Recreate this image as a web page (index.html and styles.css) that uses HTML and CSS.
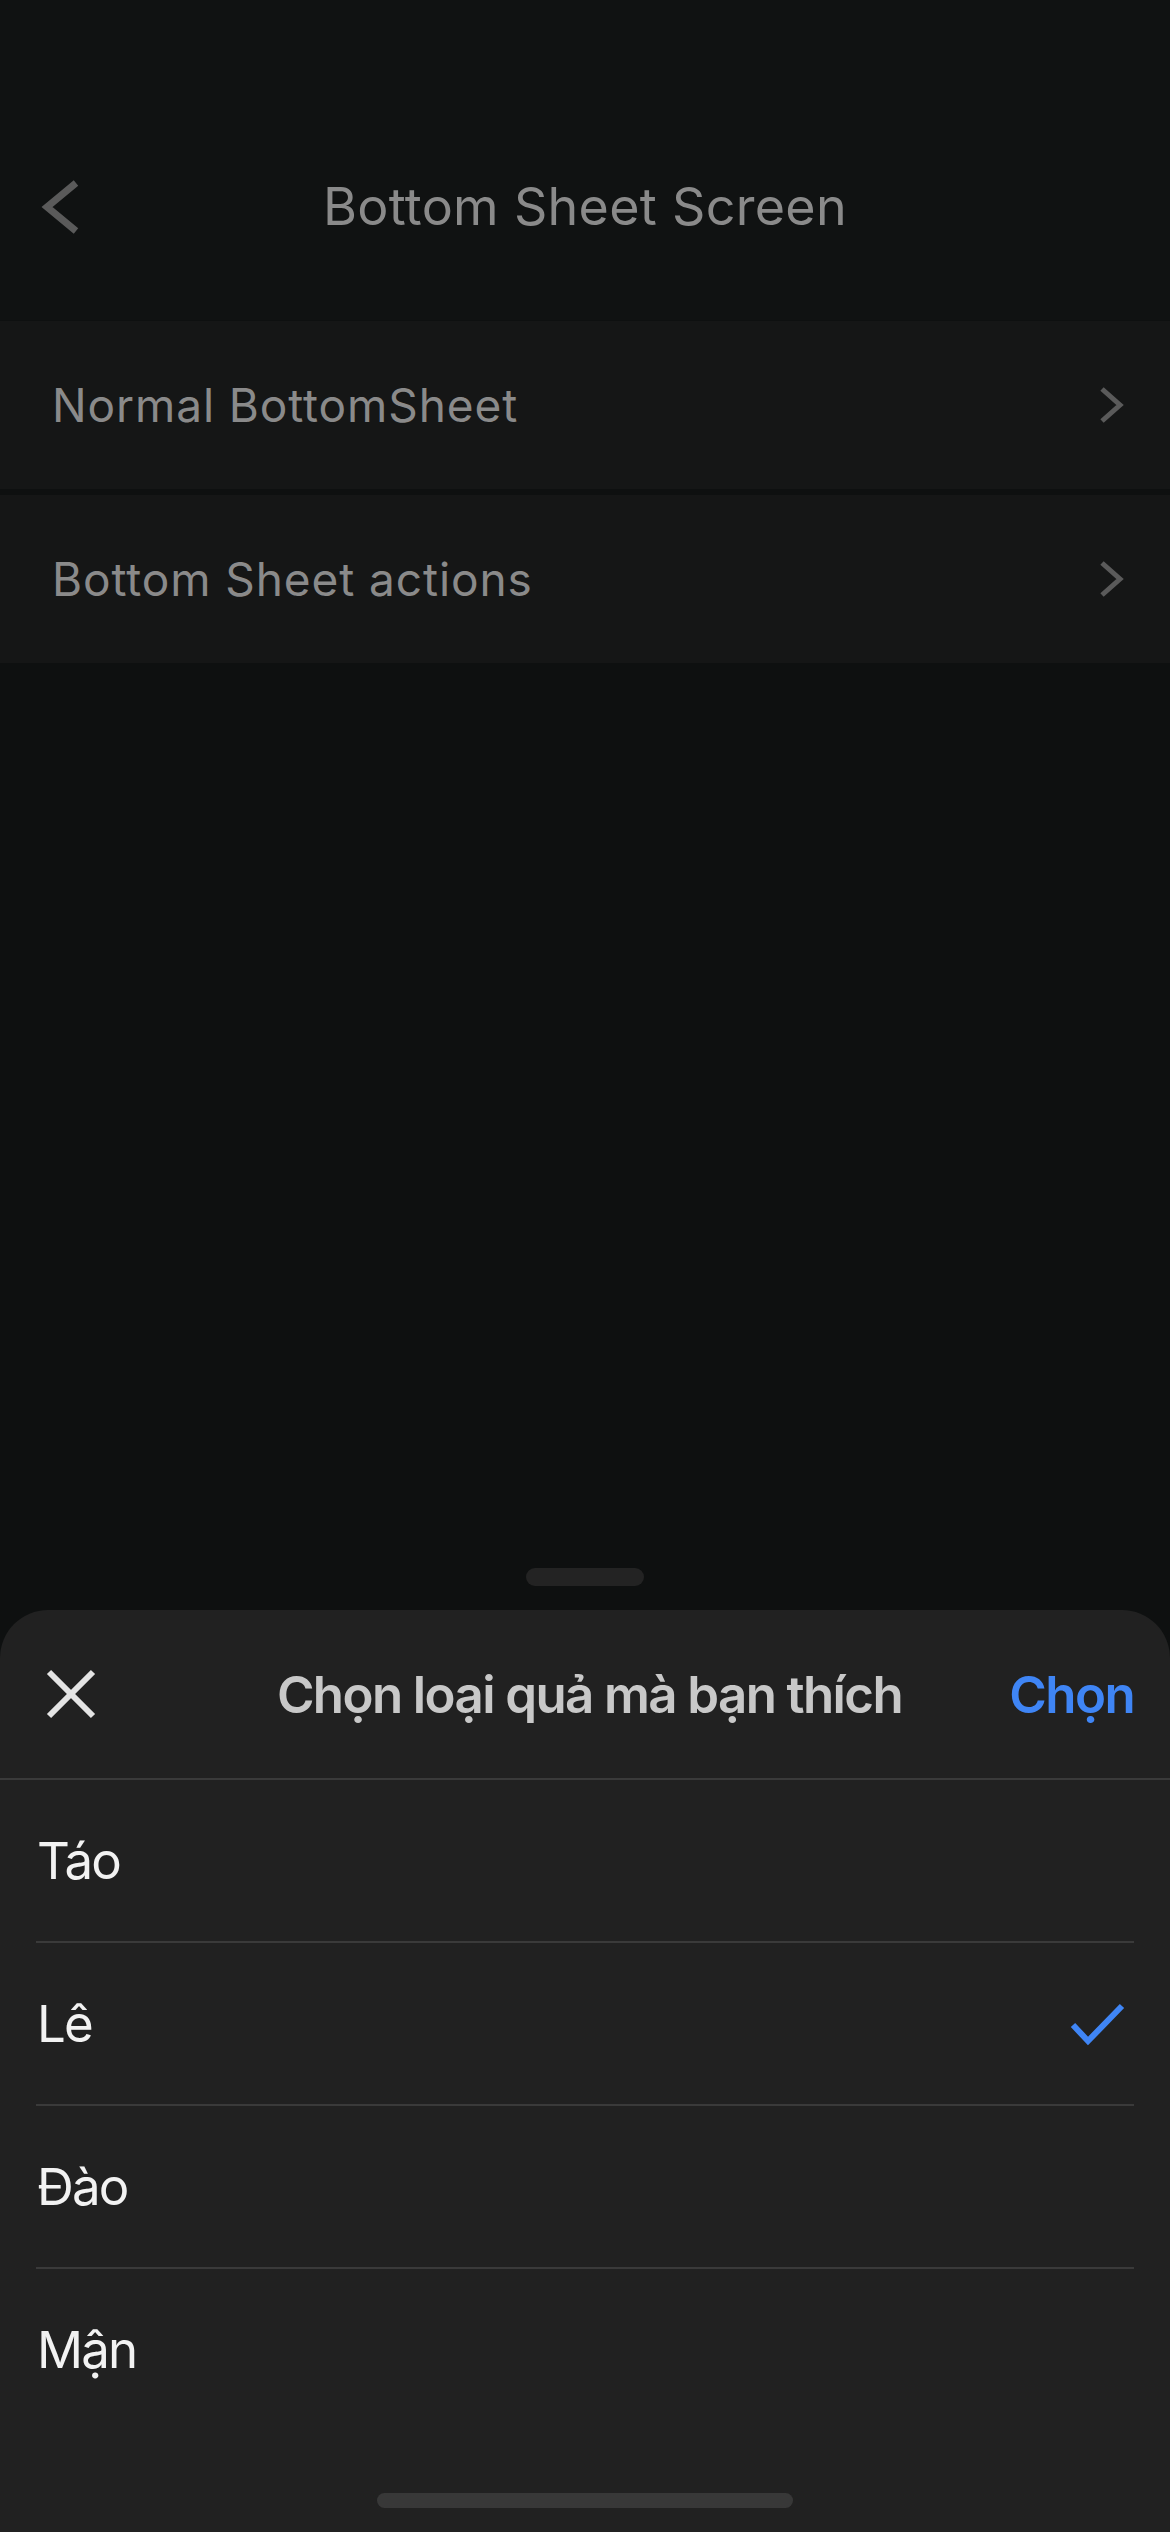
FILE: index.html
```html
<!DOCTYPE html>
<html lang="vi">
<head>
<meta charset="utf-8">
<title>Bottom Sheet Screen</title>
<link rel="stylesheet" href="styles.css">
</head>
<body>
<div class="screen">
  <header class="topbar">
    <div class="nav">
      <svg class="back" width="44" height="60" viewBox="40 176 44 60" aria-hidden="true">
        <polyline points="76,182 47,206 76,230" fill="none" stroke="#5a5a5a" stroke-width="7" stroke-linecap="butt" stroke-linejoin="miter"/>
      </svg>
      <h1 class="nav-title">Bottom Sheet Screen</h1>
      <span></span>
    </div>
  </header>

  <div class="menu">
    <div class="menu-row">
      <span class="menu-label">Normal BottomSheet</span>
      <svg class="chev" width="26" height="40" viewBox="0 0 26 40" aria-hidden="true">
        <polyline points="4,4 22,20 4,36" fill="none" stroke="#5a5a5a" stroke-width="5"/>
      </svg>
    </div>
    <div class="menu-row">
      <span class="menu-label">Bottom Sheet actions</span>
      <svg class="chev" width="26" height="40" viewBox="0 0 26 40" aria-hidden="true">
        <polyline points="4,4 22,20 4,36" fill="none" stroke="#5a5a5a" stroke-width="5"/>
      </svg>
    </div>
  </div>

  <div class="spacer"></div>

  <div class="grabber"></div>

  <section class="sheet">
    <div class="sheet-head">
      <svg class="close" width="52" height="52" viewBox="0 0 52 52" aria-hidden="true">
        <line x1="4" y1="4" x2="48" y2="48" stroke="#e4e4e4" stroke-width="6"/>
        <line x1="48" y1="4" x2="4" y2="48" stroke="#e4e4e4" stroke-width="6"/>
      </svg>
      <h2 class="sheet-title">Chọn loại quả mà bạn thích</h2>
      <span class="sheet-action">Chọn</span>
    </div>
    <ul class="options">
      <li class="option">Táo</li>
      <li class="option">
        <span>Lê</span>
        <svg class="check" width="56" height="46" viewBox="1069 2000 56 46" aria-hidden="true">
          <polyline points="1073,2024 1088,2040 1122,2005" fill="none" stroke="#3f85f5" stroke-width="6" stroke-linejoin="miter"/>
        </svg>
      </li>
      <li class="option">Đào</li>
      <li class="option">Mận</li>
    </ul>
    <div class="home-indicator"></div>
  </section>
</div>
</body>
</html>
```

FILE: styles.css
```css
* {
  box-sizing: border-box;
}

html, body {
  margin: 0;
  padding: 0;
  background: #0e1010;
}

body {
  font-family: Inter, "Noto Sans", "Liberation Sans", sans-serif;
}

.screen {
  width: 1170px;
  height: 2532px;
  display: flex;
  flex-direction: column;
  overflow: hidden;
  background: #0e1010;
}

.topbar {
  height: 321px;
  padding-top: 141px;
  background: #101212;
  border-bottom: 1px solid #0e1010;
}

.nav {
  height: 132px;
  display: grid;
  grid-template-columns: 1fr auto 1fr;
  align-items: center;
}

.back {
  margin-left: 40px;
  display: block;
}

.nav-title {
  margin: 0;
  font-size: 52px;
  font-weight: 400;
  color: #8a8a8a;
  letter-spacing: 0.3px;
  line-height: 1;
}

.menu {
  display: flex;
  flex-direction: column;
  gap: 6px;
}

.menu-row {
  height: 168px;
  background: #151616;
  display: flex;
  align-items: center;
  justify-content: space-between;
  padding: 0 46px 0 52px;
}

.menu-label {
  font-size: 46px;
  color: #8a8a8a;
  letter-spacing: 0.9px;
}

.chev {
  display: block;
}

.spacer {
  flex: 1;
}

.grabber {
  align-self: center;
  width: 118px;
  height: 18px;
  border-radius: 9px;
  background: #232323;
  margin-bottom: 24px;
  flex-shrink: 0;
}

.sheet {
  height: 922px;
  flex-shrink: 0;
  background: #212121;
  border-radius: 48px 48px 0 0;
  display: flex;
  flex-direction: column;
}

.sheet-head {
  height: 170px;
  border-bottom: 2px solid #3a3a3a;
  display: grid;
  grid-template-columns: 1fr auto 1fr;
  align-items: center;
  padding: 0 36px 0 45px;
}

.close {
  display: block;
}

.sheet-title {
  margin: 0;
  font-size: 51px;
  font-weight: 600;
  color: #c8c8c8;
  letter-spacing: -1.6px;
  line-height: 1;
}

.sheet-action {
  justify-self: end;
  font-size: 51px;
  font-weight: 600;
  color: #3f85f5;
  letter-spacing: -1.6px;
}

.options {
  list-style: none;
  margin: 0;
  padding: 0 36px;
}

.option {
  height: 163px;
  border-bottom: 2px solid #3a3a3a;
  display: flex;
  align-items: center;
  justify-content: space-between;
  font-size: 51px;
  color: #f2f2f2;
  letter-spacing: -1.8px;
  padding-left: 1px;
}

.option:last-child {
  height: 161px;
  border-bottom: none;
}

.check {
  display: block;
  margin-right: 9px;
}

.home-indicator {
  align-self: center;
  width: 416px;
  height: 15px;
  border-radius: 8px;
  background: #383838;
  margin-top: 63px;
}
```
